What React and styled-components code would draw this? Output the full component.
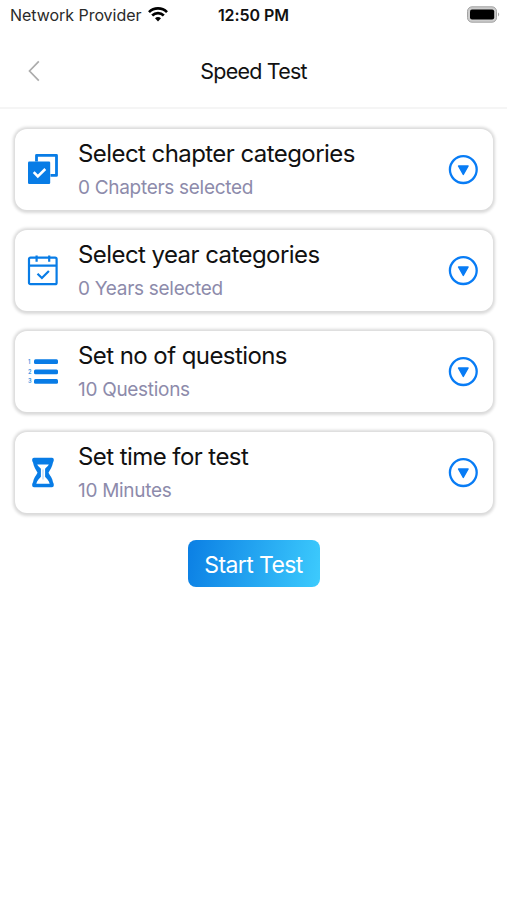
import React from "react";
import styled, { createGlobalStyle } from "styled-components";

const options = [
  { id: 1, icon: "chapters", title: "Select chapter categories", value: "0 Chapters selected" },
  { id: 2, icon: "calendar", title: "Select year categories", value: "0 Years selected" },
  { id: 3, icon: "list", title: "Set no of questions", value: "10 Questions" },
  { id: 4, icon: "hourglass", title: "Set time for test", value: "10 Minutes" },
];

const WifiIcon = () => (
  <svg width="20" height="15" viewBox="0 0 20 15" fill="none" stroke="#000" strokeWidth="2.7">
    <path d="M1 5.1C6 .2 14 .2 19 5.1" />
    <path d="M4.2 8.5C7.5 5.3 12.5 5.3 15.8 8.5" />
    <path d="M7 11.3C8.7 9.6 11.3 9.6 13 11.3L10 14.5Z" fill="#000" stroke="none" />
  </svg>
);

const BatteryIcon = () => (
  <svg width="34" height="17" viewBox="0 0 34 17">
    <rect x="1.5" y=".8" width="29" height="15.4" rx="4.5" fill="#ccc" stroke="#a3a3a3" />
    <rect x="4" y="3.6" width="24.2" height="9.8" rx="2" fill="#000" />
    <path d="M32 6.6c1.6.5 1.6 3.3 0 3.8z" fill="#aaa" />
  </svg>
);

const BackIcon = () => (
  <svg width="12" height="22" viewBox="0 0 12 22" fill="none" stroke="#acacac" strokeWidth="1.7">
    <path d="M10.8 1.3L1.5 11l9.3 9.7" />
  </svg>
);

const OptionIcon = ({ name }) => {
  if (name === "chapters") {
    return (
      <svg width="32" height="32" viewBox="0 0 32 32" fill="none">
        <path d="M9.5 7.5V1.4h20v20h-6" stroke="#087ce6" strokeWidth="2.8" strokeLinejoin="round" />
        <rect x="1" y="7.6" width="22.2" height="22.4" rx="1.2" fill="#087ce6" />
        <path d="M6.7 18.2l4.1 4.2 7.5-7.4" stroke="#fff" strokeWidth="2.6" />
      </svg>
    );
  }
  if (name === "calendar") {
    return (
      <svg width="32" height="32" viewBox="0 0 32 32" fill="none" stroke="#087ce6" strokeWidth="2.2">
        <rect x="2" y="2.6" width="27.6" height="26.6" rx="1.5" />
        <path d="M2 10.6h28M9.6 .5v6.2M22.2 .5v6.2" />
        <path d="M10.5 18.8l4.4 4.2 7-7" />
      </svg>
    );
  }
  if (name === "list") {
    return (
      <svg width="32" height="32" viewBox="0 0 32 32">
        <g fill="#087ce6">
          <rect x="7" y="3.3" width="24" height="4.8" rx="1.5" />
          <rect x="7" y="13.4" width="24" height="4.8" rx="1.5" />
          <rect x="7" y="23" width="24" height="4.8" rx="1.5" />
        </g>
        <g fill="#4c9be3" fontFamily="Inter, sans-serif" fontSize="5.5" fontWeight="700">
          <text x="1" y="7.7">1</text>
          <text x="1" y="17.8">2</text>
          <text x="1" y="27.4">3</text>
        </g>
      </svg>
    );
  }
  return (
    <svg width="32" height="32" viewBox="0 0 32 32">
      <path
        d="M7 .8h18c2.200 0 2.200 3 1 4.800C25.300 10.100 23 12.800 21.500 15.800c1.500 3 4 5.500 4.500 9.400 1.200 1.800 1.200 5-1 5H7c-2.200 0-2.200-3.200-1-5C6.500 21.300 9 18.800 10.500 15.800 9 12.800 6.700 10.100 6 5.600 4.800 3.800 4.800.8 7 .8z"
        fill="#087ce6"
      />
      <path
        d="M10.200 7.600h11.600c-.8 1.900-2.700 2.700-3.700 4.200v8c1 1.600 4 3.600 4.600 7H9.300c.6-3.400 3.600-5.400 4.600-7v-8c-1-1.500-2.900-2.300-3.700-4.200z"
        fill="#fff"
      />
      <path d="M16 12.500v10" stroke="#a5cdf6" strokeWidth="1" />
    </svg>
  );
};

const DropdownIcon = () => (
  <svg width="30" height="30" viewBox="0 0 30 30">
    <circle cx="15.3" cy="14.6" r="13.4" fill="none" stroke="#087cf5" strokeWidth="2.3" />
    <path d="M10.5 11h9.6l-4.8 8.4z" fill="#087cf5" stroke="#087cf5" strokeWidth="1.4" strokeLinejoin="round" />
  </svg>
);

const App = () => {
  return (
    <Screen>
      <GlobalStyle />
      <StatusBar>
        <Network>
          Network Provider
          <WifiIcon />
        </Network>
        <Clock>12:50 PM</Clock>
        <Battery>
          <BatteryIcon />
        </Battery>
      </StatusBar>
      <Header>
        <BackButton aria-label="Back">
          <BackIcon />
        </BackButton>
        <h1>Speed Test</h1>
      </Header>
      <OptionList>
        {options.map((option) => (
          <OptionCard key={option.id}>
            <OptionIcon name={option.icon} />
            <div className="text">
              <h2>{option.title}</h2>
              <p>{option.value}</p>
            </div>
            <DropdownIcon />
          </OptionCard>
        ))}
      </OptionList>
      <StartButton>Start Test</StartButton>
    </Screen>
  );
};

export default App;

const GlobalStyle = createGlobalStyle`
  * {
    box-sizing: border-box;
  }
  body, h1, h2, p {
    margin: 0;
  }
  body {
    background-color: #fff;
    font-family: Inter, "Liberation Sans", sans-serif;
  }
  button {
    border: none;
    padding: 0;
    font-family: inherit;
  }
  svg {
    display: block;
    flex-shrink: 0;
  }
`;

const Screen = styled.main`
  display: flex;
  flex-direction: column;
  height: 900px;
  background-color: #fff;
`;

const StatusBar = styled.div`
  display: grid;
  grid-template-columns: 1fr auto 1fr;
  align-items: center;
  height: 29px;
  padding: 0 7px 0 10px;
`;

const Network = styled.div`
  display: flex;
  align-items: center;
  gap: 7px;
  font-size: 16px;
  letter-spacing: -0.04px;
  color: #2a2a2a;
`;

const Clock = styled.div`
  font-size: 16px;
  font-weight: 600;
  letter-spacing: -0.05px;
  margin-right: 3px;
  color: #111;
`;

const Battery = styled.div`
  display: flex;
  justify-content: flex-end;
`;

const Header = styled.header`
  display: grid;
  grid-template-columns: 1fr auto 1fr;
  align-items: center;
  height: 80px;
  padding: 6px 28px 0;
  border-bottom: 2px solid #f5f5f5;
  h1 {
    font-size: 21.5px;
    font-weight: 400;
    line-height: 28px;
    letter-spacing: -0.8px;
    color: #111;
  }
`;

const BackButton = styled.button`
  justify-self: start;
  background: none;
`;

const OptionList = styled.section`
  display: flex;
  flex-direction: column;
  gap: 20px;
  padding: 20px 14px 0 15px;
`;

const OptionCard = styled.div`
  display: flex;
  align-items: center;
  height: 81px;
  padding: 1px 15px 0 12px;
  border-radius: 12px;
  background-color: #fff;
  box-shadow: 0 0.5px 3px 2px rgba(0, 0, 0, 0.15);
  .text {
    flex: 1;
    padding-left: 19px;
  }
  h2 {
    font-size: 24px;
    font-weight: 400;
    line-height: 29px;
    letter-spacing: -0.57px;
    color: #111;
  }
  p {
    padding-top: 6px;
    font-size: 19px;
    line-height: 28px;
    letter-spacing: -0.3px;
    color: #8d8bab;
  }
`;

const StartButton = styled.button`
  align-self: center;
  width: 132px;
  height: 47px;
  margin-top: 27px;
  border-radius: 8px;
  background: linear-gradient(100deg, #0b7fe4, #3dcbfd);
  color: #fff;
  font-size: 23px;
  letter-spacing: -0.6px;
  padding-top: 2px;
`;
